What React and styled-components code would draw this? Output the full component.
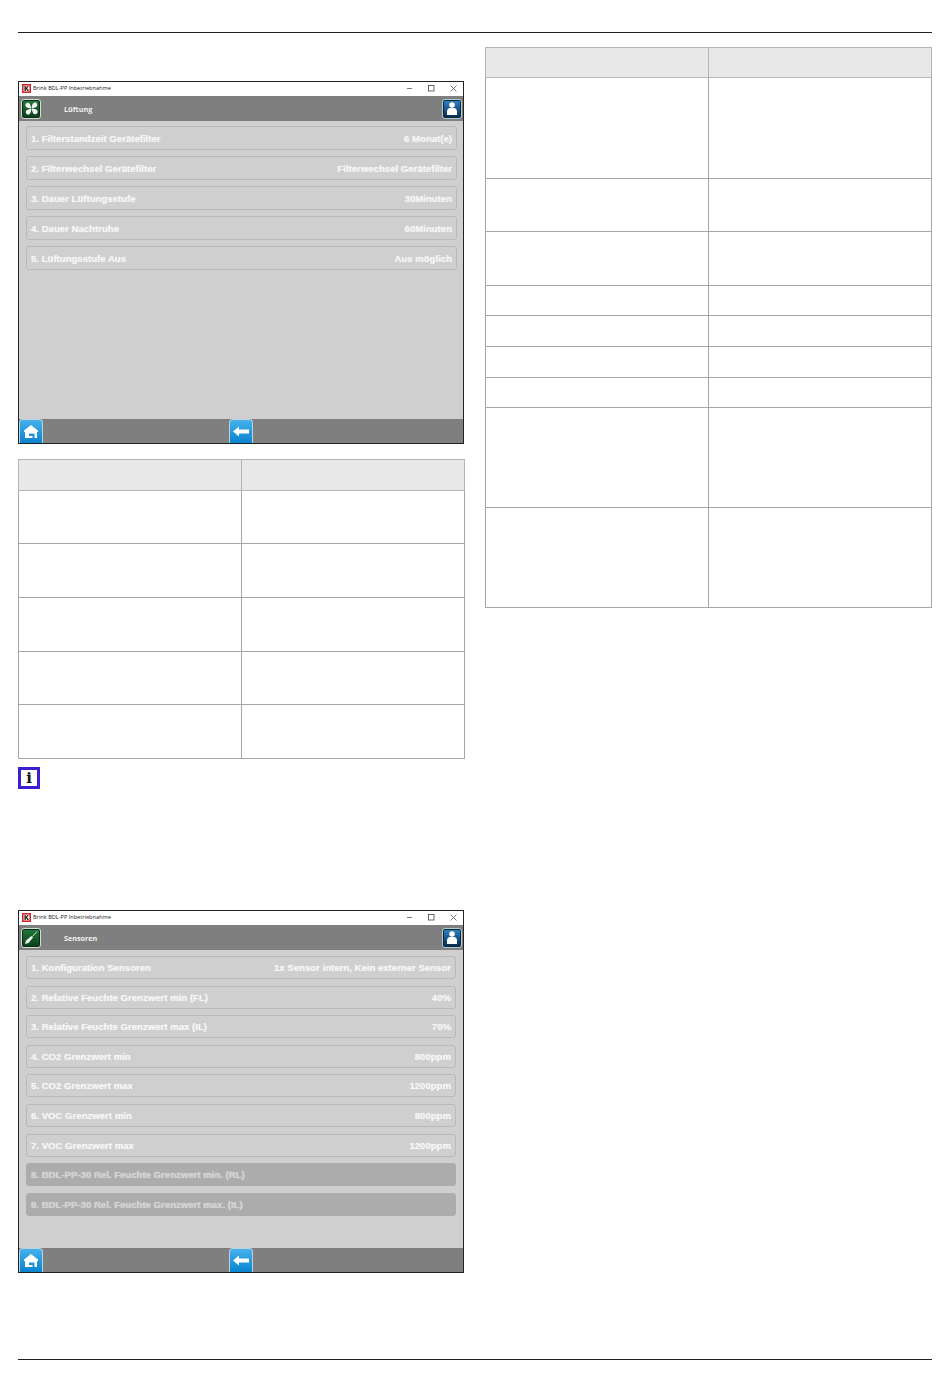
import React from "react";
import styled, { createGlobalStyle } from "styled-components";

const Global = createGlobalStyle`
    html, body {
        margin: 0;
        background: #fff;
        font-family: 'Open Sans', 'Liberation Sans', sans-serif;
    }
`

const Page = styled.div`
    width: 950px;
    height: 1392px;
    box-sizing: border-box;
    padding: 32px 18px 0;
    overflow: hidden;
`
const Rule = styled.div`
    height: 1px;
    background: #222;
`
const Columns = styled.div`
    display: grid;
    grid-template-columns: 447px 447px;
    column-gap: 20px;
    height: 1326px;
`
const LeftColumn = styled.div`
    display: flex;
    flex-direction: column;
    padding-top: 48px;
`
const RightColumn = styled.div`
    padding-top: 14px;
`

// screenshot of the software window
const Screen = styled.div`
    width: 446px;
    height: 363px;
    box-sizing: border-box;
    border: 1px solid #222;
    display: flex;
    flex-direction: column;
    margin-top: ${p => p.$top || 0}px;
`
const TitleBar = styled.div`
    height: 14px;
    box-sizing: border-box;
    flex: none;
    display: flex;
    align-items: center;
    padding: 0 6px 2px 3px;
    background: #fff;
`
const TitleText = styled.span`
    font-size: 5.6px;
    color: #222;
    margin-left: 2px;
    flex: 1;
`
const WinButtons = styled.div`
    display: flex;
    gap: 15px;
    align-items: center;
    color: #444;
`
const AppHeader = styled.div`
    height: 25px;
    flex: none;
    background: #7f7f7f;
    display: flex;
    align-items: center;
    padding: 0 1px 0 2px;
`
const AppTitle = styled.span`
    margin-left: 23px;
    flex: 1;
    font-size: 7.2px;
    font-weight: 700;
    color: #f2f2f2;
`
const IconTile = styled.div`
    width: 20px;
    height: 20px;
    box-sizing: border-box;
    border-radius: 3px;
    border: 1px solid ${p => p.$edge};
    box-shadow: inset 0 0 0 1px #0c2a18;
    background: ${p => p.$bg};
    display: flex;
    align-items: center;
    justify-content: center;
`
const Body = styled.div`
    flex: 1;
    background: #cfcfcf;
    display: flex;
    flex-direction: column;
    gap: ${p => p.$gap}px;
    padding: ${p => p.$pad}px ${p => p.$right}px 0 7px;
`
const Row = styled.div`
    height: ${p => p.$h}px;
    box-sizing: border-box;
    display: flex;
    align-items: center;
    justify-content: space-between;
    padding: 0 4px;
    border-radius: 3px;
    border: 1px solid ${p => (p.$off ? "#acacac" : "#b9b9b9")};
    background: ${p => (p.$off ? "#acacac" : "#cfcfcf")};
    color: ${p => (p.$off ? "#d2d2d2" : "#f6f6f6")};
    font-family: 'Liberation Sans', Arial, sans-serif;
    font-size: 9.6px;
    font-weight: 700;
    white-space: nowrap;
    text-shadow: 0 0 1px rgba(255, 255, 255, 0.6);
`
const AppFooter = styled.div`
    height: 24px;
    flex: none;
    background: #7f7f7f;
    display: flex;
    gap: 186px;
`
const NavButton = styled.div`
    width: 24px;
    height: 24px;
    box-sizing: border-box;
    border: 1px solid #b7d3e4;
    border-bottom: none;
    border-radius: 4px 4px 0 0;
    background: linear-gradient(#45b1ea, #0a84cf);
    display: flex;
    align-items: center;
    justify-content: center;
`

const Table = styled.table`
    width: 447px;
    border-collapse: collapse;
    table-layout: fixed;
    margin-top: ${p => p.$top || 0}px;
`
const Head = styled.th`
    background: #e8e8e8;
    border: 1px solid #b5b5b5;
    height: ${p => p.$h}px;
    padding: 0;
`
const Cell = styled.td`
    border: 1px solid #a6a6a6;
    height: ${p => p.$h}px;
    padding: 0;
`
const InfoBox = styled.div`
    width: 22px;
    height: 22px;
    box-sizing: border-box;
    margin-top: 8px;
    border: 3px solid #3b1fd0;
    display: flex;
    align-items: center;
    justify-content: center;
    font-family: 'DejaVu Serif', 'Liberation Serif', serif;
    font-weight: 700;
    font-size: 15px;
    line-height: 1;
    color: #111;
`

const Logo = () => (
    <svg width="9" height="9" viewBox="0 0 9 9">
        <rect width="9" height="9" fill="#d2232a" />
        <rect x="1.500" y="1.500" width="6" height="6" fill="#f4e9e9" />
        <path d="M2.500 2h1.300v2L5.500 2h1.300L5 4.300 7 7H5.500L3.800 4.800V7H2.500z" fill="#222" />
    </svg>
);

const WinIcons = () => (
    <WinButtons>
        <svg width="6" height="6" viewBox="0 0 6 6"><path d="M0 3.500h5" stroke="#555" strokeWidth=".8" /></svg>
        <svg width="7" height="7" viewBox="0 0 7 7"><rect x=".5" y=".5" width="5.500" height="5.500" fill="none" stroke="#444" strokeWidth=".8" /></svg>
        <svg width="7" height="7" viewBox="0 0 7 7"><path d="M.5.5l6 6M6.500.5l-6 6" stroke="#444" strokeWidth=".7" /></svg>
    </WinButtons>
);

const FanIcon = () => (
    <svg width="15" height="15" viewBox="0 0 16 16" fill="#f4f4f4">
        <path d="M8 7.500C6 8 2.500 7.500 1.500 5 1 3 3 1.500 5 2c1.500.3 1.500 2 3 5.500z" />
        <path d="M8.500 8C8 6 8.500 2.500 11 1.500c2-.5 3.500 1.500 3 3.500-.3 1.500-2 1.500-5.500 3z" />
        <path d="M8 8.500c2-.5 5.500 0 6.500 2.500.5 2-1.500 3.500-3.500 3-1.500-.3-1.500-2-3-5.500z" />
        <path d="M7.500 8c.5 2 0 5.500-2.500 6.500-2 .5-3.500-1.500-3-3.500.3-1.500 2-1.500 5.500-3z" />
    </svg>
);

const ProbeIcon = () => (
    <svg width="16" height="16" viewBox="0 0 16 16">
        <path d="M2 14 L3 10.500 L8.500 6 L10 7.500 L5.500 13 Z" fill="#eef5ea" />
        <path d="M9.500 6.500 L14 1.500" stroke="#cfe6cc" strokeWidth="1" />
    </svg>
);

const UserIcon = () => (
    <svg width="12" height="16" viewBox="0 0 12 16" fill="#fff">
        <circle cx="6" cy="4" r="2.800" />
        <path d="M1 14v-3.500C1 8.500 2.500 7 4 7h4c1.500 0 3 1.500 3 3.500V14z" />
    </svg>
);

const HomeIcon = () => (
    <svg width="16" height="15" viewBox="0 0 16 15" fill="#fff" fillRule="evenodd">
        <path d="M8 1 L15 6.500 L15 8 L14 8 L14 14 L11.500 14 L11.500 9.500 L6 9.500 L6 12 L9.500 12 L9.500 14 L2 14 L2 8 L1 8 L1 6.500 Z" />
    </svg>
);

const BackIcon = () => (
    <svg width="16" height="11" viewBox="0 0 16 11" fill="#fff">
        <path d="M0 5.500 L6 0.500 L6 3.500 L16 3.500 L16 7.500 L6 7.500 L6 10.500 Z" />
    </svg>
);

const AppWindow = ({ top, right, tile, title, rowH, gap, pad, rows }) => (
    <Screen $top={top}>
        <TitleBar>
            <Logo />
            <TitleText>Brink BDL-PP Inbetriebnahme</TitleText>
            <WinIcons />
        </TitleBar>
        <AppHeader>
            <IconTile $bg="linear-gradient(#1f7a3a, #0d3d1c)" $edge="#cfe0d0">{tile}</IconTile>
            <AppTitle>{title}</AppTitle>
            <IconTile $bg="linear-gradient(#2f86cc, #0a2450)" $edge="#a9cbe6"><UserIcon /></IconTile>
        </AppHeader>
        <Body $gap={gap} $pad={pad} $right={right}>
            {rows.map(r => (
                <Row key={r[0]} $h={rowH} $off={r[2]}>
                    <span>{r[0]}</span>
                    <span>{r[1]}</span>
                </Row>
            ))}
        </Body>
        <AppFooter>
            <NavButton><HomeIcon /></NavButton>
            <NavButton><BackIcon /></NavButton>
        </AppFooter>
    </Screen>
);

const EmptyTable = ({ top, split, head, heights }) => (
    <Table $top={top}>
        <colgroup>
            <col style={{ width: split }} />
            <col />
        </colgroup>
        <thead>
            <tr><Head $h={head} /><Head $h={head} /></tr>
        </thead>
        <tbody>
            {heights.map((h, i) => (
                <tr key={i}><Cell $h={h} /><Cell $h={h} /></tr>
            ))}
        </tbody>
    </Table>
);

const ventRows = [
    ["1. Filterstandzeit Gerätefilter", "6 Monat(e)"],
    ["2. Filterwechsel Gerätefilter", "Filterwechsel Gerätefilter"],
    ["3. Dauer Lüftungsstufe", "30Minuten"],
    ["4. Dauer Nachtruhe", "60Minuten"],
    ["5. Lüftungsstufe Aus", "Aus möglich"],
];

const sensorRows = [
    ["1. Konfiguration Sensoren", "1x Sensor intern, Kein externer Sensor"],
    ["2. Relative Feuchte Grenzwert min (FL)", "40%"],
    ["3. Relative Feuchte Grenzwert max (IL)", "70%"],
    ["4. CO2 Grenzwert min", "800ppm"],
    ["5. CO2 Grenzwert max", "1200ppm"],
    ["6. VOC Grenzwert min", "800ppm"],
    ["7. VOC Grenzwert max", "1200ppm"],
    ["8. BDL-PP-30 Rel. Feuchte Grenzwert min. (RL)", "", true],
    ["9. BDL-PP-30 Rel. Feuchte Grenzwert max. (IL)", "", true],
];

export default function App() {
    return (
        <Page>
            <Global />
            <Rule />
            <Columns>
                <LeftColumn>
                    <AppWindow right={6} tile={<FanIcon />} title="Lüftung" rowH={24} gap={6} pad={5} rows={ventRows} />
                    <EmptyTable top={15} split={223} head={30} heights={[52, 53, 53, 52, 53]} />
                    <InfoBox>i</InfoBox>
                    <AppWindow top={121} right={7} tile={<ProbeIcon />} title="Sensoren" rowH={23} gap={6.6} pad={6} rows={sensorRows} />
                </LeftColumn>
                <RightColumn>
                    <EmptyTable split={223} head={29} heights={[100, 52, 53, 29, 30, 30, 29, 99, 99]} />
                </RightColumn>
            </Columns>
            <Rule />
        </Page>
    )
}
